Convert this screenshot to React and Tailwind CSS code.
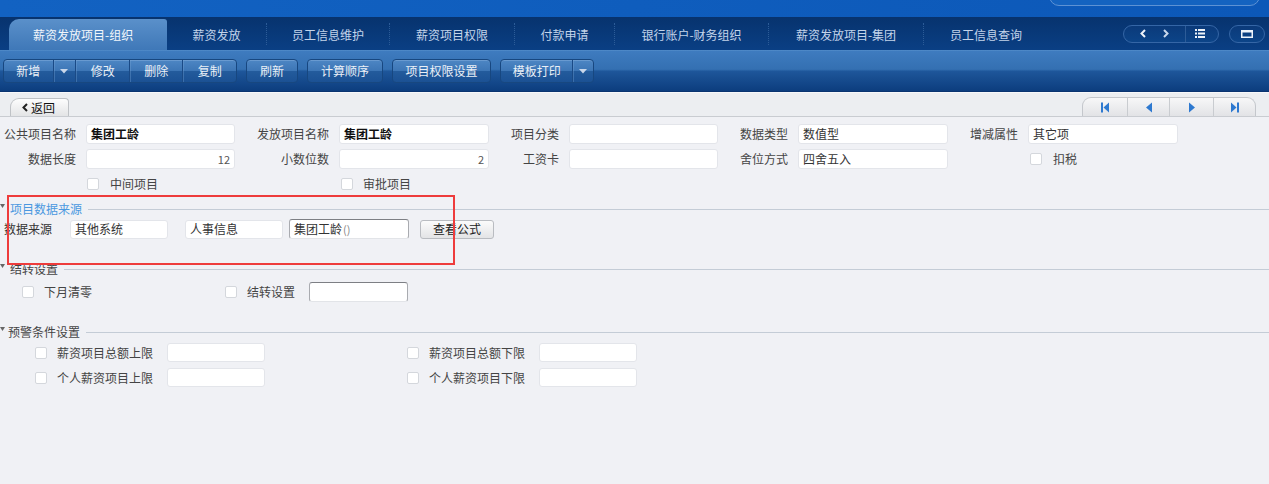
import React from 'react';

const tabs = [
  ['薪资发放', 'w-[99px]'],
  ['员工信息维护', 'w-[122px]'],
  ['薪资项目权限', 'w-[124px]'],
  ['付款申请', 'w-[99px]'],
  ['银行账户-财务组织', 'w-[153px]'],
  ['薪资发放项目-集团', 'w-[154px]'],
  ['员工信息查询', 'w-[124px]'],
];

const btnBg =
  'bg-[linear-gradient(to_bottom,#4d86c4_0%,#3d76b6_48%,#235b9c_52%,#1b5194_100%)] border border-[#174780] shadow-[inset_0_1px_0_rgba(140,180,225,0.45)]';

const Caret = () => (
  <svg width="8" height="5" viewBox="0 0 8 5">
    <polygon points="0,0 8,0 4,4.5" fill="#c9d7ea" />
  </svg>
);

const ToolBtn = ({ children, w }) => (
  <div className={`h-[24px] ${w} ${btnBg} rounded-[4px] flex items-center justify-center text-[12px] text-[#eaf0f7]`}>
    {children}
  </div>
);

const Seg = ({ children, w, first }) => (
  <div
    className={`h-full ${w} flex items-center justify-center ${first ? '' : 'border-l border-[#1a4a86] shadow-[inset_1px_0_0_rgba(120,165,215,0.35)]'}`}
  >
    {children}
  </div>
);

const Check = () => (
  <span className="block w-[12px] h-[12px] shrink-0 bg-white border border-[#d4d7dc] rounded-[2px]" />
);

const Field = ({ value = '', w = 'w-[150px]', bold, right, dark, h = 'h-[20px]' }) => (
  <div
    className={`${h} ${w} shrink-0 bg-white rounded-[3px] border flex items-center px-[4px] ${
      dark ? 'border-[#a9abb0] border-t-[#7d7f84] border-b-[#e2e4e8]' : 'border-[#e3e5ea]'
    } ${right ? 'justify-end text-[11px] text-[#555]' : 'text-[12px]'} ${bold ? 'font-bold text-[#111]' : 'text-[#333]'}`}
  >
    {value}
  </div>
);

const Label = ({ children, w }) => (
  <div className={`${w} shrink-0 pr-[10px] text-right text-[12px] text-[#444]`}>{children}</div>
);

const Section = ({ title, blue, ml = 'ml-[5px]', className = '' }) => (
  <div className={`flex items-center h-[14px] ${className}`}>
    <svg width="5" height="5" viewBox="0 0 5 5" className="shrink-0 mb-[5px]">
      <polygon points="0,0 5,0 2.5,4" fill="#666" />
    </svg>
    <span className={`${ml} text-[12px] ${blue ? 'text-[#4a98e0]' : 'text-[#444]'}`}>{title}</span>
    <div className="flex-1 ml-[6px] h-px bg-[#c4ccd6]" />
  </div>
);

const NavIcon = ({ type }) => (
  <svg width="10" height="11" viewBox="0 0 10 11">
    {type === 'first' && (
      <>
        <rect x="1" y="0.5" width="2" height="10" fill="#2e79d0" />
        <polygon points="9,0.5 9,10.5 3.5,5.5" fill="#2e79d0" />
      </>
    )}
    {type === 'prev' && <polygon points="8,0.5 8,10.5 2,5.5" fill="#2e79d0" />}
    {type === 'next' && <polygon points="2,0.5 2,10.5 8,5.5" fill="#2e79d0" />}
    {type === 'last' && (
      <>
        <polygon points="1,0.5 1,10.5 6.5,5.5" fill="#2e79d0" />
        <rect x="7" y="0.5" width="2" height="10" fill="#2e79d0" />
      </>
    )}
  </svg>
);

export default function App() {
  return (
    <div className="relative w-full min-h-[484px] bg-[#f0f1f5] font-['Noto_Sans_CJK_SC','Liberation_Sans',sans-serif] overflow-hidden">
      {/* top header */}
      <div className="h-[17px] bg-[linear-gradient(to_right,#1262c2,#0c58b8)] flex justify-end items-end overflow-hidden">
        <div className="w-[211px] h-[30px] shrink-0 mr-[9px] mb-[11px] rounded-[10px] border border-[#5d92d4] bg-[#1463c0]" />
      </div>

      {/* tab bar */}
      <div className="h-[33px] bg-[linear-gradient(to_bottom,#07336e,#0a3f84)] flex">
        <div className="flex items-end pl-[9px]">
          <div className="w-[158px] h-[31px] pl-[24px] flex items-center rounded-tl-[10px] rounded-tr-[3px] bg-[linear-gradient(to_bottom,#5a90ca,#3f78b8)] text-[12px] text-[#f2f6fb]">
            薪资发放项目-组织
          </div>
          {tabs.map(([t, w], i) => (
            <React.Fragment key={t}>
              {i > 0 && <div className="w-0 h-[22px] mb-[5px] border-l border-dotted border-[#2c5c98]" />}
              <div className={`${w} h-[31px] flex items-center justify-center text-[12px] text-[#c3d4ea]`}>{t}</div>
            </React.Fragment>
          ))}
        </div>
        <div className="ml-auto flex items-center gap-[10px] mr-[4px]">
          <div className="w-[96px] h-[18px] rounded-full border border-[#3566a6] bg-[linear-gradient(to_bottom,#0b3a7a,#0c4488)] flex items-center">
            <div className="flex items-center gap-[17px] pl-[16px] w-[61px]">
              <svg width="6" height="9" viewBox="0 0 6 9">
                <polyline points="5,1 1.5,4.5 5,8" fill="none" stroke="#eef3fa" strokeWidth="2" />
              </svg>
              <svg width="6" height="9" viewBox="0 0 6 9">
                <polyline points="1,1 4.5,4.5 1,8" fill="none" stroke="#c9d8ec" strokeWidth="2" />
              </svg>
            </div>
            <div className="w-px h-[16px] bg-[#2d5c98]" />
            <div className="flex-1 flex justify-center pr-[4px]">
              <svg width="10" height="9" viewBox="0 0 10 9">
                <rect x="0" y="0" width="2" height="2" fill="#eef3fa" />
                <rect x="3" y="0" width="7" height="2" fill="#eef3fa" />
                <rect x="0" y="3.5" width="2" height="2" fill="#eef3fa" />
                <rect x="3" y="3.5" width="7" height="2" fill="#eef3fa" />
                <rect x="0" y="7" width="2" height="2" fill="#eef3fa" />
                <rect x="3" y="7" width="7" height="2" fill="#eef3fa" />
              </svg>
            </div>
          </div>
          <div className="w-[36px] h-[18px] rounded-full border border-[#3566a6] bg-[linear-gradient(to_bottom,#0b3a7a,#0c4488)] flex items-center justify-center">
            <svg width="12" height="8" viewBox="0 0 12 8">
              <rect x="0.75" y="0.75" width="10.5" height="6.5" fill="none" stroke="#eef3fa" strokeWidth="1.5" />
              <rect x="0" y="0" width="12" height="2.5" fill="#eef3fa" />
            </svg>
          </div>
        </div>
      </div>

      {/* toolbar */}
      <div className="h-[42px] bg-[linear-gradient(to_bottom,#5690cc_0%,#3e7bbf_3%,#3470b2_47%,#1e569a_52%,#0c3d7e_100%)] flex items-start pt-[9px] pl-[3px] gap-[9px] border-b border-[#0a3470]">
        <div className={`h-[24px] w-[234px] ${btnBg} rounded-[4px] flex text-[12px] text-[#eaf0f7]`}>
          <Seg w="w-[49px]" first>新增</Seg>
          <Seg w="w-[23px]"><Caret /></Seg>
          <Seg w="w-[54px]">修改</Seg>
          <Seg w="w-[54px]">删除</Seg>
          <Seg w="w-[54px]">复制</Seg>
        </div>
        <ToolBtn w="w-[52px]">刷新</ToolBtn>
        <ToolBtn w="w-[76px]">计算顺序</ToolBtn>
        <ToolBtn w="w-[99px]">项目权限设置</ToolBtn>
        <div className={`h-[24px] w-[94px] ${btnBg} rounded-[4px] flex text-[12px] text-[#eaf0f7]`}>
          <Seg w="w-[73px]" first>模板打印</Seg>
          <Seg w="w-[21px]"><Caret /></Seg>
        </div>
      </div>

      {/* back / navigation row */}
      <div className="h-[25px] bg-[#eceef1] border-t border-[#f7f8fa] border-b border-b-[#c9ccd1] flex items-end justify-between">
        <div className="ml-[10px] w-[59px] h-[18px] rounded-tl-[9px] rounded-tr-[4px] border border-b-0 border-[#bfc2c6] bg-[linear-gradient(to_bottom,#fdfdfd,#e3e4e6)] flex items-center pl-[11px] gap-[3px] text-[12px] text-[#111]">
          <svg width="6" height="9" viewBox="0 0 6 9">
            <polyline points="5,1 1.5,4.5 5,8" fill="none" stroke="#222" strokeWidth="2" />
          </svg>
          返回
        </div>
        <div className="mr-[13px] h-[19px] flex rounded-tl-[9px] rounded-tr-[9px] border border-b-0 border-[#c4c7cc] bg-[linear-gradient(to_bottom,#f7f7f8,#e2e3e6)]">
          <div className="w-[44px] flex items-center justify-center"><NavIcon type="first" /></div>
          <div className="w-[42px] flex items-center justify-center border-l border-[#c9ccd0]"><NavIcon type="prev" /></div>
          <div className="w-[44px] flex items-center justify-center border-l border-[#c9ccd0]"><NavIcon type="next" /></div>
          <div className="w-[42px] flex items-center justify-center border-l border-[#c9ccd0]"><NavIcon type="last" /></div>
        </div>
      </div>

      {/* form */}
      <div className="pt-[7px]">
        <div className="flex items-center h-[20px]">
          <Label w="w-[86px]">公共项目名称</Label>
          <Field w="w-[149px]" value="集团工龄" bold />
          <Label w="w-[104px]">发放项目名称</Label>
          <Field w="w-[150px]" value="集团工龄" bold />
          <Label w="w-[80px]">项目分类</Label>
          <Field w="w-[149px]" />
          <Label w="w-[80px]">数据类型</Label>
          <Field w="w-[150px]" value="数值型" />
          <Label w="w-[80px]">增减属性</Label>
          <Field w="w-[150px]" value="其它项" />
        </div>
        <div className="flex items-center h-[20px] mt-[5px]">
          <Label w="w-[86px]">数据长度</Label>
          <Field w="w-[149px]" value="12" right />
          <Label w="w-[104px]">小数位数</Label>
          <Field w="w-[150px]" value="2" right />
          <Label w="w-[80px]">工资卡</Label>
          <Field w="w-[149px]" />
          <Label w="w-[80px]">舍位方式</Label>
          <Field w="w-[150px]" value="四舍五入" />
          <div className="w-[82px] shrink-0" />
          <Check />
          <span className="ml-[11px] text-[12px] text-[#444]">扣税</span>
        </div>
        <div className="flex items-center h-[14px] mt-[8px] text-[12px] text-[#444]">
          <div className="w-[87px] shrink-0" />
          <div className="w-[148px] shrink-0 flex items-center">
            <Check />
            <span className="ml-[11px]">中间项目</span>
          </div>
          <div className="w-[106px] shrink-0" />
          <Check />
          <span className="ml-[10px]">审批项目</span>
        </div>

        <Section title="项目数据来源" blue className="mt-[11px]" />
        <div className="flex items-center h-[20px] mt-[3px]">
          <div className="w-[70px] shrink-0 pl-[4px] text-[12px] text-[#333]">数据来源</div>
          <Field w="w-[98px]" value="其他系统" h="h-[19px]" />
          <div className="w-[17px] shrink-0" />
          <Field w="w-[98px]" value="人事信息" h="h-[19px]" />
          <div className="w-[6px] shrink-0" />
          <Field
            w="w-[120px]"
            dark
            value={
              <>
                集团工龄<span className="text-[#888] text-[11px] ml-[1px]">()</span>
              </>
            }
          />
          <div className="ml-[11px] w-[74px] h-[19px] rounded-[3px] border border-[#b9bcc1] bg-[linear-gradient(to_bottom,#fbfbfb,#e3e4e6)] flex items-center justify-center text-[12px] text-[#222]">
            查看公式
          </div>
        </div>

        <Section title="结转设置" className="mt-[23px]" />
        <div className="flex items-center h-[20px] mt-[6px] text-[12px] text-[#444]">
          <div className="w-[22px] shrink-0" />
          <Check />
          <span className="ml-[10px] w-[181px]">下月清零</span>
          <Check />
          <span className="ml-[10px] w-[62px]">结转设置</span>
          <Field w="w-[99px]" dark />
        </div>

        <Section title="预警条件设置" ml="ml-[3px]" className="mt-[23px]" />
        {[
          ['薪资项目总额上限', '薪资项目总额下限'],
          ['个人薪资项目上限', '个人薪资项目下限'],
        ].map(([a, b], i) => (
          <div key={a} className={`flex items-center h-[19px] text-[12px] text-[#444] ${i === 0 ? 'mt-[4px]' : 'mt-[6px]'}`}>
            <div className="w-[35px] shrink-0" />
            <Check />
            <span className="ml-[10px] w-[110px] shrink-0">{a}</span>
            <Field w="w-[98px]" h="h-[19px]" />
            <div className="w-[142px] shrink-0" />
            <Check />
            <span className="ml-[10px] w-[110px] shrink-0">{b}</span>
            <Field w="w-[98px]" h="h-[19px]" />
          </div>
        ))}
      </div>

      {/* annotation box */}
      <div className="absolute left-[7px] top-[195px] w-[448px] h-[70px] border-2 border-[#ee3c3c] pointer-events-none" />
    </div>
  );
}
